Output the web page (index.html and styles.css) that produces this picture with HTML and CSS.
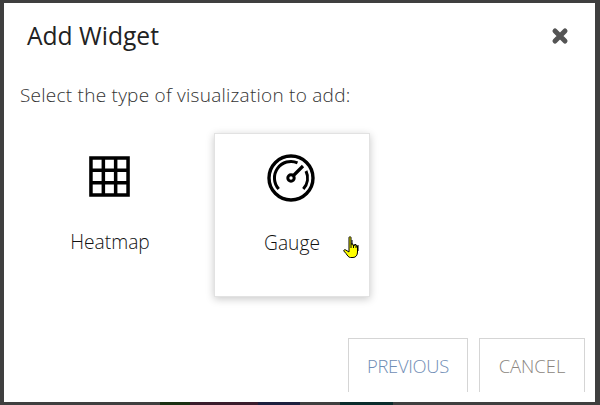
FILE: index.html
```html
<!DOCTYPE html>
<html lang="en">
<head>
    <meta charset="UTF-8">
    <meta name="viewport" content="width=device-width, initial-scale=1.0">
    <title>Add Widget</title>
    <link rel="stylesheet" href="styles.css">
</head>
<body>
    <div class="dialog">
        <div class="header">
            <h2>Add Widget</h2>
            <svg class="close" viewBox="0 0 18 18" width="18" height="18">
                <path d="M4 4L14 14M14 4L4 14" stroke="#545454" stroke-width="5" stroke-linecap="round"/>
            </svg>
        </div>
        <p class="prompt">Select the type of visualization to add:</p>
        <div class="types">
            <div class="type">
                <svg class="heatmap-icon" viewBox="0 0 42 42" width="41" height="41">
                    <path d="M2 2H40V40H2ZM14.7 2V40M27.3 2V40M2 14.7H40M2 27.3H40" fill="none" stroke="#000" stroke-width="3.6"/>
                </svg>
                <span>Heatmap</span>
            </div>
            <div class="type active">
                <svg class="gauge-icon" viewBox="0 0 48 48" width="48" height="48">
                    <circle cx="24" cy="24" r="22" fill="none" stroke="#000" stroke-width="3.4"/>
                    <path d="M11.7 35A16.5 16.5 0 0 1 30.5 8.8M39 17A16.5 16.5 0 0 1 36.3 35" fill="none" stroke="#000" stroke-width="3"/>
                    <circle cx="24" cy="24" r="3.2" fill="none" stroke="#000" stroke-width="3"/>
                    <path d="M26.5 21.5L36 12" stroke="#000" stroke-width="3.2"/>
                </svg>
                <span>Gauge</span>
                <svg class="pointer" viewBox="0 0 18 23" width="18" height="23">
                    <path d="M8 4H10V9H16V15H8Z" fill="#7a7a7a"/>
                    <path d="M6 1.5C6 .5 8 .5 8 1.5V8H10V9.5H11.5V8.5H13V10H14.5V16C14.5 19 13 21.5 10 21.5H7.5C5.5 21.5 4.5 19.5 3 17.5L.8 15C.5 14 1.8 13.2 2.8 14L6 16Z" fill="#ffff00" stroke="#000" stroke-width="1"/>
                    <path d="M8 8V12M10.5 9V12M13 10V12" stroke="#000" stroke-width="1"/>
                </svg>
            </div>
        </div>
        <div class="footer">
            <button class="previous">PREVIOUS</button>
            <button class="cancel">CANCEL</button>
        </div>
    </div>
</body>
</html>
```

FILE: styles.css
```css
* {
    box-sizing: border-box;
}
body {
    margin: 0;
    height: 405px;
    overflow: hidden;
    padding: 3px 5px 3px 4px;
    font-family: "Open Sans", "Noto Sans", sans-serif;
    background:
        linear-gradient(90deg, #3f3f3f 160px, #1a2f12 160px, #1a2f12 190px, #3a1c2c 190px, #3a1c2c 258px, #1c1f3e 258px, #1c1f3e 300px, #3f3f3f 300px, #3f3f3f 340px, #0b2c2c 340px, #0b2c2c 393px, #3f3f3f 393px) bottom / 100% 3px no-repeat,
        #3f3f3f;
}
.dialog {
    height: 399px;
    background: #fff;
    display: flex;
    flex-direction: column;
}
.header {
    display: flex;
    justify-content: space-between;
    align-items: center;
    padding: 17px 26px 0 23px;
}
.header h2 {
    margin: 0;
    font-size: 24.6px;
    font-weight: 400;
    line-height: 32px;
    color: #222;
}
.close {
    display: block;
    margin-top: -1px;
}
.prompt {
    margin: 31px 0 0 16px;
    font-size: 19px;
    font-weight: 300;
    letter-spacing: 0.25px;
    line-height: 24px;
    color: #333;
}
.types {
    display: flex;
    gap: 26px;
    margin: 26px 0 0 28px;
}
.type {
    position: relative;
    width: 156px;
    height: 164px;
    display: flex;
    flex-direction: column;
    align-items: center;
    color: #111;
    font-size: 19.2px;
    font-weight: 300;
}
.type span {
    line-height: 24px;
    position: absolute;
    top: 97px;
}
.heatmap-icon {
    margin-top: 23px;
    margin-right: 2px;
}
.gauge-icon {
    margin-top: 20px;
    margin-right: 2px;
}
.active {
    border: 1px solid #e2e2e2;
    box-shadow: 0 2px 8px rgba(0, 0, 0, 0.22);
}
.pointer {
    position: absolute;
    left: 128px;
    top: 102px;
}
.footer {
    display: flex;
    justify-content: flex-end;
    gap: 11px;
    margin-top: 41px;
    padding-right: 10px;
}
.footer button {
    height: 54px;
    background: #fff;
    border: 1px solid #d5d5d5;
    border-bottom: none;
    font-family: inherit;
    font-size: 18.4px;
    font-weight: 300;
    padding: 0;
}
.previous {
    width: 120px;
    color: #6f8db5;
    letter-spacing: -0.3px;
}
.cancel {
    width: 106px;
    color: #8a8580;
}
```
